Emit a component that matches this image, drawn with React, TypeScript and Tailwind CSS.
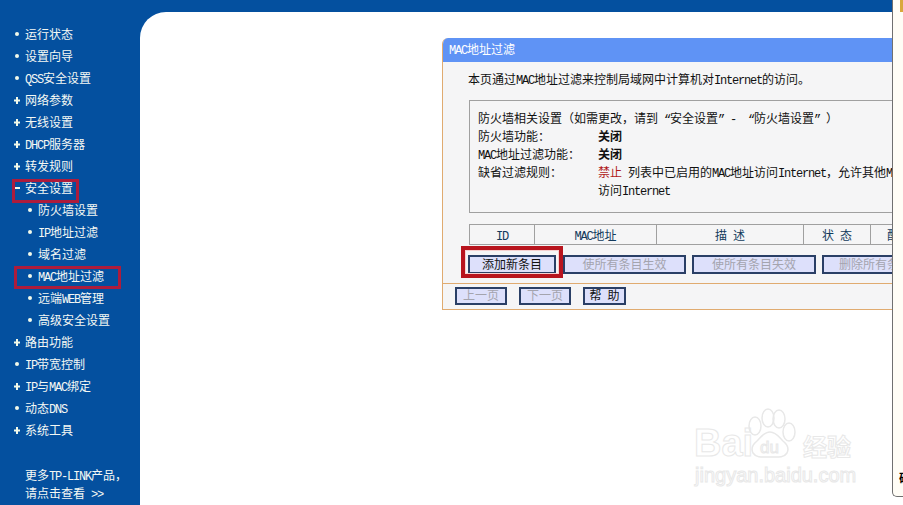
const menu = [
  { mark: "dot", label: "运行状态" },
  { mark: "dot", label: "设置向导" },
  { mark: "dot", label: "QSS安全设置" },
  { mark: "plus", label: "网络参数" },
  { mark: "plus", label: "无线设置" },
  { mark: "plus", label: "DHCP服务器" },
  { mark: "plus", label: "转发规则" },
  { mark: "minus", label: "安全设置", box: "top-[2px] left-[12px] h-[24px] w-[67px]" },
  { mark: "dot", label: "防火墙设置", sub: true },
  { mark: "dot", label: "IP地址过滤", sub: true },
  { mark: "dot", label: "域名过滤", sub: true },
  { mark: "dot", label: "MAC地址过滤", sub: true, box: "top-[1px] left-[14px] h-[23px] w-[107px]" },
  { mark: "dot", label: "远端WEB管理", sub: true },
  { mark: "dot", label: "高级安全设置", sub: true },
  { mark: "plus", label: "路由功能" },
  { mark: "dot", label: "IP带宽控制" },
  { mark: "plus", label: "IP与MAC绑定" },
  { mark: "dot", label: "动态DNS" },
  { mark: "plus", label: "系统工具" },
]

// the old page font has half-width latin, so latin runs get squeezed to 6px a char
function Txt({ children }: { children: string }) {
  return (
    <>
      {children.split(/([\x20-\x7e\u00a0“”]+)/).map((run, i) =>
        i % 2 ? (
          <span key={i} className="text-[12px] leading-[0] tracking-[-1.2px] [font-family:'Liberation_Mono',monospace]">
            {run}
          </span>
        ) : (
          run
        ),
      )}
    </>
  )
}

function Mark({ type }: { type: string }) {
  if (type === "plus") {
    return (
      <svg width="6" height="7" viewBox="0 0 6 7" className="-ml-[1px] shrink-0">
        <path d="M2 0h2v2.500h2v2H4V7H2V4.500H0v-2h2z" fill="#f2faea" />
      </svg>
    )
  }
  if (type === "minus") {
    return <span className="block h-[2px] w-[5px] shrink-0 bg-[#f2faea]" />
  }
  return <span className="block size-[4px] shrink-0 rounded-full bg-[#f2faea]" />
}

function MenuRow({ mark, label, sub, box }: { mark: string; label: string; sub?: boolean; box?: string }) {
  return (
    <li className={`relative flex h-[22px] items-center ${sub ? "pl-[28px]" : "pl-[15px]"}`}>
      <Mark type={mark} />
      <span
        className={`text-[12px] leading-none whitespace-nowrap text-[#f4f8f4] ${sub ? "ml-[6px]" : mark === "dot" ? "ml-[6px]" : "ml-[5px]"}`}
      >
        <Txt>{label}</Txt>
      </span>
      {box && <span className={`absolute border-[3px] border-[#ad1c3c] ${box}`} />}
    </li>
  )
}

function PageButton({ label, disabled, width }: { label: string; disabled?: boolean; width: string }) {
  return (
    <button
      className={`h-[18px] shrink-0 border-2 border-[#2a3f66] bg-[#dde0fb] pb-[2px] text-[12px] leading-none ${width} ${disabled ? "text-[#a4a4ae]" : "text-[#111]"}`}
    >
      <Txt>{label}</Txt>
    </button>
  )
}

function ActionButton({ label, disabled, width }: { label: string; disabled?: boolean; width: string }) {
  return (
    <button
      className={`h-[19px] shrink-0 overflow-hidden border-2 border-[#2a3f66] bg-[#dde0fb] pb-[2px] text-[12px] leading-none whitespace-nowrap ${width} ${disabled ? "text-[#a4a4ae]" : "text-[#111]"}`}
    >
      <Txt>{label}</Txt>
    </button>
  )
}

function Watermark() {
  return (
    <div className="absolute top-[405px] left-[690px] h-[85px] w-[170px] text-transparent [-webkit-text-stroke:1px_#e8e8e8]">
      <span className="absolute top-[16px] left-[4px] text-[38px] leading-[44px] font-bold [font-family:'Liberation_Sans',sans-serif]">
        Bai
      </span>
      <svg width="60" height="56" viewBox="0 0 60 56" fill="none" stroke="#e8e8e8" strokeWidth="1.500" className="absolute top-[3px] left-[52px]">
        <ellipse cx="13" cy="18" rx="6" ry="9" />
        <ellipse cx="26" cy="10" rx="6" ry="9" />
        <ellipse cx="37" cy="11" rx="6" ry="9" />
        <ellipse cx="47" cy="24" rx="6" ry="9" />
        <path d="M28 24c6 0 9 5 13 9 5 4 6 8 4 12-3 5-10 4-17 4s-14 1-17-4c-2-4-1-8 4-12 4-4 7-9 13-9z" />
      </svg>
      <span className="absolute top-[33px] left-[70px] text-[17px] leading-[20px] [font-family:'Liberation_Sans',sans-serif]">
        du
      </span>
      <span className="absolute top-[27px] left-[113px] text-[24px] leading-[28px] font-bold">经验</span>
      <span className="absolute top-[58px] left-[5px] text-[20px] leading-[24px] whitespace-nowrap [font-family:'Liberation_Sans',sans-serif]">
        jingyan.baidu.com
      </span>
    </div>
  )
}

export default function App() {
  return (
    <div className="relative flex h-[505px] w-[903px] overflow-hidden bg-white [font-family:'Noto_Sans_CJK_SC',sans-serif]">
      <div className="flex w-[892px] shrink-0 bg-[#04509f]">
        <aside className="flex w-[140px] shrink-0 flex-col pt-[23px]">
          <ul>
            {menu.map((item) => (
              <MenuRow key={item.label} {...item} />
            ))}
          </ul>
          <p className="mt-[25px] pl-[25px] text-[12px] leading-[18px] whitespace-nowrap text-[#f4f8f4]">
            <Txt>更多TP-LINK产品，</Txt>
            <br />
            <Txt>请点击查看 &gt;&gt;</Txt>
          </p>
        </aside>

        <main className="mt-[12px] flex min-w-0 flex-1 rounded-tl-[26px] bg-white">
          <section className="mt-[26px] ml-[302px] h-[272px] w-[450px] shrink-0 overflow-hidden rounded-tl-[6px] border-b border-l border-[#e0ab70] bg-[#f5f5f6] text-[12px] text-[#111]">
            <h1 className="flex h-[24px] items-center bg-[#5f93f5] pb-[2px] pl-[6px] leading-none text-white">
              <span><Txt>MAC地址过滤</Txt></span>
            </h1>
            <p className="mt-[8px] pl-[25px] leading-[18px] whitespace-nowrap">
              <Txt>本页通过MAC地址过滤来控制局域网中计算机对Internet的访问。</Txt>
            </p>
            <div className="mt-[12px] ml-[26px] h-[113px] border-y border-l border-[#a0a0a0] pt-[8px] pl-[8px] leading-[18px] whitespace-nowrap">
              <p><Txt>{"防火墙相关设置（如需更改，请到 “安全设置” - \u00a0“防火墙设置” ）"}</Txt></p>
              <div className="flex">
                <span className="w-[120px] shrink-0"><Txt>防火墙功能：</Txt></span>
                <b>关闭</b>
              </div>
              <div className="flex">
                <span className="w-[120px] shrink-0"><Txt>MAC地址过滤功能：</Txt></span>
                <b>关闭</b>
              </div>
              <div className="flex">
                <span className="w-[120px] shrink-0"><Txt>缺省过滤规则：</Txt></span>
                <span>
                  <span className="text-[#b01818]">禁止</span>
                  <Txt> 列表中已启用的MAC地址访问Internet，允许其他MAC地址</Txt>
                  <br />
                  <Txt>访问Internet</Txt>
                </span>
              </div>
            </div>
            <div className="mt-[11px] ml-[26px] flex h-[21px] border-b border-[#a0a0a0] text-center leading-[20px] whitespace-nowrap text-[#123a5c]">
              <span className="w-[65px] shrink-0 border-t border-l border-[#a0a0a0]"><Txt>ID</Txt></span>
              <span className="w-[122px] shrink-0 border-t border-l border-[#a0a0a0]"><Txt>MAC地址</Txt></span>
              <span className="w-[147px] shrink-0 border-t border-l border-[#a0a0a0]"><Txt>描 述</Txt></span>
              <span className="w-[67px] shrink-0 border-t border-l border-[#a0a0a0]"><Txt>状 态</Txt></span>
              <span className="w-[22px] shrink-0 border-t border-l border-[#a0a0a0] pl-[16px] text-left"><Txt>配</Txt></span>
            </div>
            <div className="mt-[10px] ml-[25px] flex gap-[6px]">
              <div className="relative mr-[1px] flex">
                <ActionButton label="添加新条目" width="w-[88px]" />
                <span className="absolute -inset-x-[7px] -top-[9px] -bottom-[4px] border-[4px] border-[#b8141e] shadow-[inset_0_0_0_1px_#f6d0d0]" />
              </div>
              <ActionButton label="使所有条目生效" disabled width="w-[123px]" />
              <ActionButton label="使所有条目失效" disabled width="w-[124px]" />
              <ActionButton label="删除所有条目" disabled width="w-[106px]" />
            </div>
            <div className="mt-[9px] flex h-[26px] items-start gap-[12px] border-t border-[#e0ab70] pt-[3px] pl-[12px]">
              <PageButton label="上一页" disabled width="w-[52px]" />
              <PageButton label="下一页" disabled width="w-[52px]" />
              <PageButton label="帮 助" width="w-[43px]" />
            </div>
          </section>
        </main>
      </div>

      <div className="flex h-[497px] w-[11px] shrink-0 flex-col overflow-hidden rounded-bl-[5px] border-b border-l border-[#707070] bg-[#fffdf6]">
        <span className="ml-[7px] block h-[12px] w-[3px] shrink-0 bg-[#d9a83c]" />
        <span className="mt-auto mb-[12px] ml-[6px] text-[12px] leading-none font-bold text-black">确</span>
      </div>

      <Watermark />
    </div>
  )
}
